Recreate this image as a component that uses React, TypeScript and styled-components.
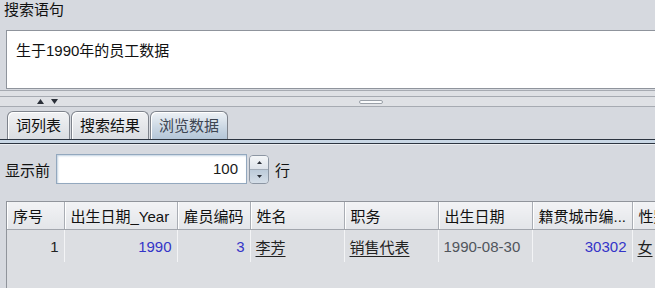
import React from "react"
import styled, { createGlobalStyle } from "styled-components"

const GlobalStyle = createGlobalStyle`
	html, body {
		margin: 0;
		padding: 0;
		overflow: hidden;
	}
	body {
		font-family: "Liberation Sans", "Noto Sans CJK SC", sans-serif;
		font-size: 15px;
		color: #111;
	}
`

const Page = styled.div`
	width: 655px;
	height: 288px;
	overflow: hidden;
	background: #d6d9df;
	display: flex;
	flex-direction: column;
`

const TopPanel = styled.div`
	display: flex;
	flex-direction: column;
	gap: 8px;
`

const Label = styled.div`
	height: 22px;
	line-height: 20px;
	padding-left: 4px;
`

const QueryBox = styled.div`
	height: 59px;
	margin-left: 6px;
	margin-right: -4px;
	background: #fff;
	border: 1px solid #8f949c;
	padding: 10px 0 0 9px;
	box-sizing: border-box;
	line-height: 20px;
`

const Divider = styled.div`
	margin-top: 1px;
	border-top: 1px solid #a7abb2;
	border-bottom: 1px solid #a7abb2;
	padding-top: 5px;
	background: #dfe1e5;
`

const GripRow = styled.div`
	height: 9px;
	border-top: 1px solid #a7abb2;
	display: flex;
	align-items: center;
	padding-left: 37px;
	gap: 7px;
`

const Arrow = styled.svg`
	width: 7px;
	height: 5px;
	fill: #2a2f38;
`

const Grip = styled.div`
	margin-left: 294px;
	width: 22px;
	height: 2px;
	border: 1px solid #9aa0a8;
	border-radius: 2px;
	background: #fafbfc;
`

const TabStrip = styled.div`
	display: flex;
	align-items: flex-end;
	margin-top: 4px;
	padding-left: 7px;
	gap: 1px;
	height: 28px;
`

const Tab = styled.div<{ $active?: boolean }>`
	height: 27px;
	padding: 0 8px;
	border: 1px solid #7e838c;
	border-bottom: none;
	border-radius: 6px 6px 0 0;
	line-height: 28px;
	color: ${(p) => (p.$active ? "#3d4552" : "#111")};
	background: ${(p) =>
		p.$active
			? "linear-gradient(#eef2f6, #c9d6e3 60%, #b4c6d8)"
			: "linear-gradient(#f1f2f4, #dadde2)"};
	box-shadow: inset 1px 1px 0 #ffffff;
`

const TabBaseline = styled.div`
	height: 3px;
	background: #c9d7e5;
	border-top: 1px solid #2c3440;
	border-bottom: 1px solid #2c3440;
	box-shadow: 0 1px 0 #eceef1;
`

const Content = styled.div`
	flex: 1;
	display: flex;
	flex-direction: column;
	padding-top: 10px;
`

const SpinnerRow = styled.div`
	display: flex;
	align-items: center;
	height: 30px;
	padding-left: 5px;
`

const SpinnerField = styled.div`
	margin-left: 6px;
	width: 191px;
	height: 30px;
	box-sizing: border-box;
	border: 1px solid #93a8be;
	box-shadow: inset 1px 1px 2px #c3d2e1;
	background: #fff;
	text-align: right;
	padding-right: 8px;
	line-height: 28px;
	color: #1a1a1a;
`

const SpinButtons = styled.div`
	margin-left: 2px;
	width: 20px;
	height: 29px;
	box-sizing: border-box;
	border: 1px solid #8c96a3;
	border-radius: 4px;
	display: grid;
	grid-template-rows: 1fr 1fr;
	overflow: hidden;
`

const SpinHalf = styled.div<{ $down?: boolean }>`
	display: flex;
	align-items: center;
	justify-content: center;
	background: ${(p) =>
		p.$down
			? "linear-gradient(#bccbd9, #d5dee8)"
			: "linear-gradient(#f4f6f8, #dde3ea)"};
	border-top: ${(p) => (p.$down ? "1px solid #a3adb9" : "none")};
`

const SpinArrow = styled.svg`
	width: 5px;
	height: 3px;
	fill: #2a2f38;
`

const RowsLabel = styled.span`
	margin-left: 6px;
`

const TableWrap = styled.div`
	margin-top: 17px;
	margin-left: 6px;
	flex: 1;
	border-top: 1px solid #90949b;
	border-left: 1px solid #90949b;
	background: #dcdee2;
	overflow: hidden;
`

const Grid = styled.table`
	border-collapse: collapse;
	table-layout: fixed;
	width: 700px;
`

const HeadCell = styled.th`
	height: 27px;
	padding: 0 2px 0 6px;
	text-align: left;
	font-weight: normal;
	white-space: nowrap;
	overflow: hidden;
	background: linear-gradient(#f2f3f5, #e3e5e9);
	border-right: 1px solid #a9adb4;
	border-bottom: 1px solid #a2a6ad;
	box-shadow: inset 1px 0 0 #ffffff;
	color: #111;
`

const Cell = styled.td<{ $align?: "left" | "right"; $tone?: "blue" | "grey" | "link" }>`
	height: 32px;
	padding: 0 5px;
	text-align: ${(p) => p.$align ?? "left"};
	white-space: nowrap;
	border-right: 1px solid #f3f4f6;
	color: ${(p) =>
		p.$tone === "blue" ? "#3434c8" : p.$tone === "grey" ? "#50555c" : "#222"};
	text-decoration: ${(p) => (p.$tone === "link" ? "underline" : "none")};
	text-underline-offset: 3px;
`

type Column = { title: string; width: number }

const columns: Column[] = [
	{ title: "序号", width: 57 },
	{ title: "出生日期_Year", width: 113 },
	{ title: "雇员编码", width: 73 },
	{ title: "姓名", width: 94 },
	{ title: "职务", width: 94 },
	{ title: "出生日期", width: 94 },
	{ title: "籍贯城市编...", width: 100 },
	{ title: "性别", width: 75 },
]

export default function App() {
	return (
		<Page>
			<GlobalStyle />
			<TopPanel>
				<Label>搜索语句</Label>
				<QueryBox>生于1990年的员工数据</QueryBox>
			</TopPanel>
			<Divider>
				<GripRow>
					<Arrow viewBox="0 0 7 5">
						<polygon points="3.5,0 7,5 0,5" />
					</Arrow>
					<Arrow viewBox="0 0 7 5">
						<polygon points="0,0 7,0 3.5,5" />
					</Arrow>
					<Grip />
				</GripRow>
			</Divider>
			<TabStrip>
				<Tab>词列表</Tab>
				<Tab>搜索结果</Tab>
				<Tab $active>浏览数据</Tab>
			</TabStrip>
			<TabBaseline />
			<Content>
				<SpinnerRow>
					显示前
					<SpinnerField>100</SpinnerField>
					<SpinButtons>
						<SpinHalf>
							<SpinArrow viewBox="0 0 5 3">
								<polygon points="2.5,0 5,3 0,3" />
							</SpinArrow>
						</SpinHalf>
						<SpinHalf $down>
							<SpinArrow viewBox="0 0 5 3">
								<polygon points="0,0 5,0 2.5,3" />
							</SpinArrow>
						</SpinHalf>
					</SpinButtons>
					<RowsLabel>行</RowsLabel>
				</SpinnerRow>
				<TableWrap>
					<Grid>
						<colgroup>
							{columns.map((c) => (
								<col key={c.title} style={{ width: c.width }} />
							))}
						</colgroup>
						<thead>
							<tr>
								{columns.map((c) => (
									<HeadCell key={c.title}>{c.title}</HeadCell>
								))}
							</tr>
						</thead>
						<tbody>
							<tr>
								<Cell $align="right">1</Cell>
								<Cell $align="right" $tone="blue">1990</Cell>
								<Cell $align="right" $tone="blue">3</Cell>
								<Cell $tone="link">李芳</Cell>
								<Cell $tone="link">销售代表</Cell>
								<Cell $tone="grey">1990-08-30</Cell>
								<Cell $align="right" $tone="blue">30302</Cell>
								<Cell $tone="link">女</Cell>
							</tr>
						</tbody>
					</Grid>
				</TableWrap>
			</Content>
		</Page>
	)
}
